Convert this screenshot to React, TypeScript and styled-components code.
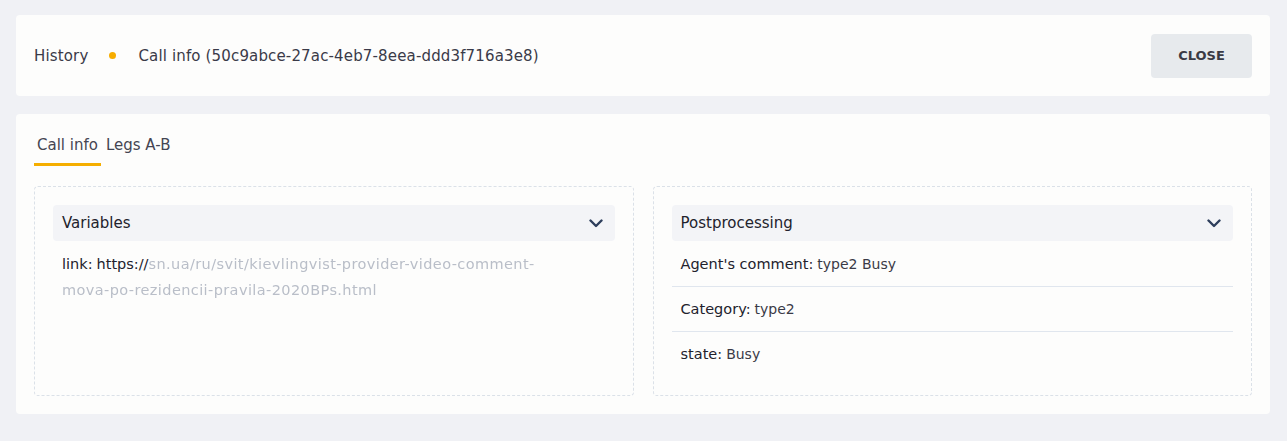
import { useState } from "react";
import styled, { createGlobalStyle } from "styled-components";

const GlobalStyle = createGlobalStyle`
    * { box-sizing: border-box; }
    body {
        margin: 0;
        background: #f0f1f5;
        font-family: "DejaVu Sans", "Liberation Sans", sans-serif;
        color: #2b2b36;
    }
`;

const Page = styled.div`
    display: flex;
    flex-direction: column;
    gap: 18px;
    padding: 15px 17px 27px 16px;
`;

const Card = styled.div`
    background: #fdfdfc;
    border-radius: 4px;
`;

const Header = styled(Card)`
    display: flex;
    align-items: center;
    justify-content: space-between;
    height: 81px;
    padding: 0 18px;
`;

const Crumbs = styled.div`
    display: flex;
    align-items: center;
    font-size: 15px;
    letter-spacing: 0.15px;
    line-height: 20px;
    color: #3a3a48;
`;

const Dot = styled.span`
    width: 7px;
    height: 7px;
    margin: 0 22px 0 21px;
    border-radius: 50%;
    background: #f7ad00;
`;

const CloseButton = styled.button`
    width: 101px;
    height: 44px;
    border: 0;
    border-radius: 4px;
    background: #e7eaed;
    font-family: inherit;
    font-size: 13px;
    font-weight: 600;
    color: #3a3a44;
    cursor: pointer;
`;

const Body = styled(Card)`
    padding: 18px 18px 18px;
`;

const Tabs = styled.div`
    display: flex;
    gap: 2px;
    margin-bottom: 20px;
`;

const Tab = styled.button<{ active: boolean }>`
    padding: 3px 3px 8px;
    border: 0;
    border-bottom: 3px solid ${(p) => (p.active ? "#f5ae00" : "transparent")};
    background: none;
    font-family: inherit;
    font-size: 15px;
    line-height: 20px;
    color: #454552;
    cursor: pointer;
`;

const Panels = styled.div`
    display: grid;
    grid-template-columns: 1fr 1fr;
    gap: 19px;
`;

const Panel = styled.div`
    min-height: 210px;
    padding: 18px 18px 16px;
    border: 1px dashed #dbe1e8;
    border-radius: 4px;
`;

const AccordionHead = styled.div`
    display: flex;
    align-items: center;
    justify-content: space-between;
    height: 36px;
    padding: 0 12px 0 9px;
    border-radius: 4px;
    background: #f3f4f7;
    font-size: 15px;
    color: #22222c;
`;

const Row = styled.div<{ divided?: boolean }>`
    display: flex;
    align-items: center;
    min-height: 45px;
    padding: 0 9px;
    font-size: 14px;
    color: #3a3a46;
    border-top: ${(p) => (p.divided ? "1px solid #e0e6ee" : "0")};
`;

const Label = styled.span`
    font-size: 14.5px;
    color: #22222c;
    margin-right: 4px;
`;

const LinkText = styled.div`
    margin-top: 10px;
    padding: 0 9px;
    font-size: 14.5px;
    line-height: 26px;
    color: #22222c;
`;

const LinkLine = styled.div`
    white-space: nowrap;
`;

const Masked = styled.span`
    color: #b9bec8;
    filter: blur(0.5px);
    letter-spacing: 0.4px;
`;

function Chevron() {
    return (
        <svg width="14" height="9" viewBox="0 0 14 9" fill="none">
            <path d="M1.5 1.5 7 7l5.5-5.5" stroke="#2d3e5c" strokeWidth="2.4" strokeLinecap="round" strokeLinejoin="round" />
        </svg>
    );
}

const postprocessing = [
    { label: "Agent's comment:", value: "type2 Busy" },
    { label: "Category:", value: "type2" },
    { label: "state:", value: "Busy" },
];

function App() {
    const [tab, setTab] = useState("info");

    return (
        <>
            <GlobalStyle />
            <Page>
                <Header>
                    <Crumbs>
                        <span>History</span>
                        <Dot />
                        <span>Call info (50c9abce-27ac-4eb7-8eea-ddd3f716a3e8)</span>
                    </Crumbs>
                    <CloseButton>CLOSE</CloseButton>
                </Header>

                <Body>
                    <Tabs>
                        <Tab active={tab === "info"} onClick={() => setTab("info")}>Call info</Tab>
                        <Tab active={tab === "legs"} onClick={() => setTab("legs")}>Legs A-B</Tab>
                    </Tabs>

                    <Panels>
                        <Panel>
                            <AccordionHead>
                                Variables
                                <Chevron />
                            </AccordionHead>
                            <LinkText>
                                <LinkLine>
                                    <Label>link:</Label>https://<Masked>sn.ua/ru/svit/kievlingvist-provider-video-comment-</Masked>
                                </LinkLine>
                                <LinkLine>
                                    <Masked>mova-po-rezidencii-pravila-2020BPs.html</Masked>
                                </LinkLine>
                            </LinkText>
                        </Panel>

                        <Panel>
                            <AccordionHead>
                                Postprocessing
                                <Chevron />
                            </AccordionHead>
                            {postprocessing.map((item, i) => (
                                <Row key={item.label} divided={i > 0}>
                                    <Label>{item.label}</Label>
                                    {item.value}
                                </Row>
                            ))}
                        </Panel>
                    </Panels>
                </Body>
            </Page>
        </>
    );
}

export default App;
